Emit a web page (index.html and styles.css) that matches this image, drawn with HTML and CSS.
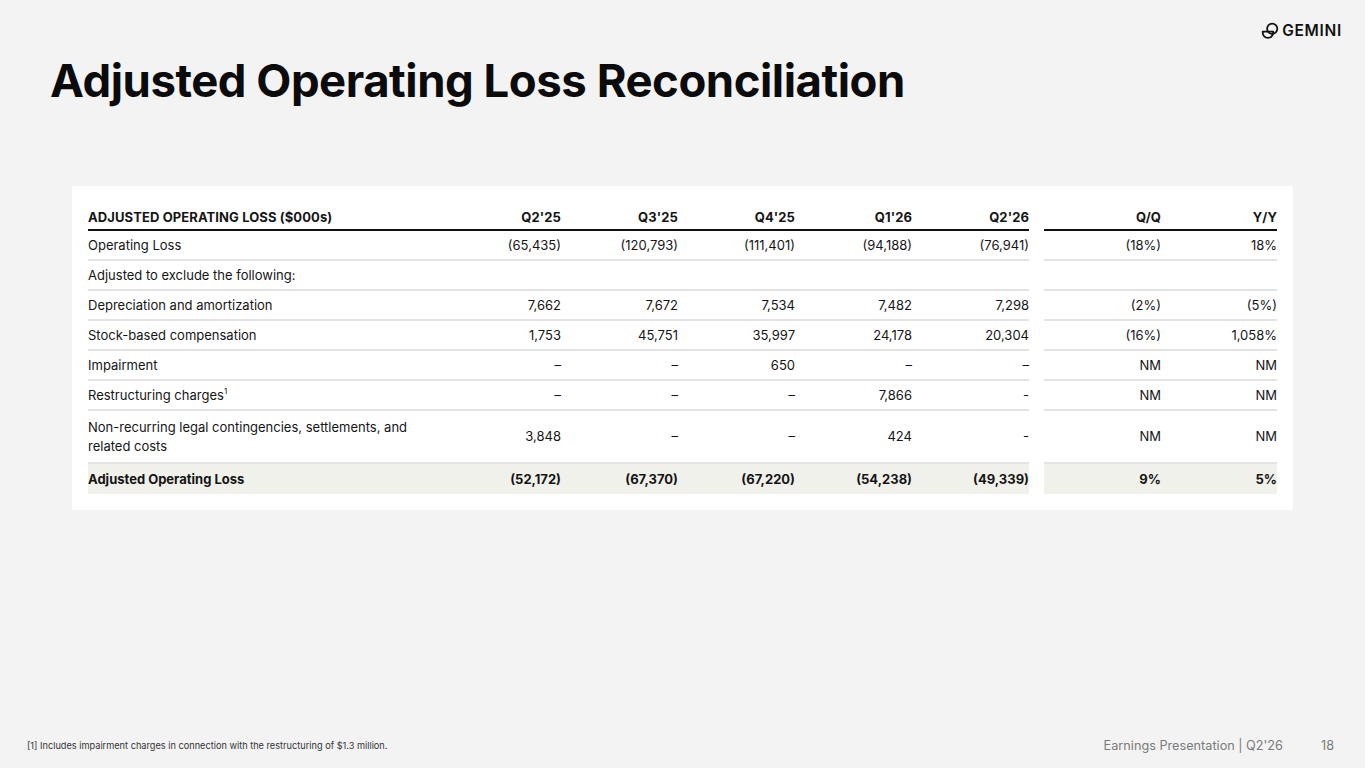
FILE: index.html
```html
<!DOCTYPE html>
<html lang="en">
<head>
<meta charset="utf-8">
<title>Adjusted Operating Loss Reconciliation</title>
<link rel="stylesheet" href="styles.css">
</head>
<body>
<div class="slide">
  <header class="top">
    <h1 class="title">Adjusted Operating Loss Reconciliation</h1>
    <div class="logo">
      <svg class="logo-mark" viewBox="0 0 18 18" width="18" height="18" aria-hidden="true">
        <circle cx="11.2" cy="6.8" r="5.1" fill="none" stroke="#111" stroke-width="1.8"/>
        <path d="M1.7 9.6 H12.2 V10.6 A5.2 5.2 0 0 1 7 15.8 H6.9 A5.2 5.2 0 0 1 1.7 10.6 Z" fill="none" stroke="#111" stroke-width="1.8" stroke-linejoin="round"/>
      </svg>
      <span class="logo-text">GEMINI</span>
    </div>
  </header>

  <section class="card">
    <table class="recon">
      <colgroup>
        <col class="c-label">
        <col class="c-num"><col class="c-num"><col class="c-num"><col class="c-num"><col class="c-num">
        <col class="c-gap">
        <col class="c-num"><col class="c-num2">
      </colgroup>
      <thead>
        <tr>
          <th class="lbl">ADJUSTED OPERATING LOSS ($000s)</th>
          <th>Q2'25</th><th>Q3'25</th><th>Q4'25</th><th>Q1'26</th><th>Q2'26</th>
          <th class="gap"></th>
          <th>Q/Q</th><th>Y/Y</th>
        </tr>
      </thead>
      <tbody>
        <tr>
          <td class="lbl">Operating Loss</td>
          <td>(65,435)</td><td>(120,793)</td><td>(111,401)</td><td>(94,188)</td><td>(76,941)</td>
          <td class="gap"></td>
          <td>(18%)</td><td>18%</td>
        </tr>
        <tr>
          <td class="lbl">Adjusted to exclude the following:</td>
          <td></td><td></td><td></td><td></td><td></td>
          <td class="gap"></td>
          <td></td><td></td>
        </tr>
        <tr>
          <td class="lbl">Depreciation and amortization</td>
          <td>7,662</td><td>7,672</td><td>7,534</td><td>7,482</td><td>7,298</td>
          <td class="gap"></td>
          <td>(2%)</td><td>(5%)</td>
        </tr>
        <tr>
          <td class="lbl">Stock-based compensation</td>
          <td>1,753</td><td>45,751</td><td>35,997</td><td>24,178</td><td>20,304</td>
          <td class="gap"></td>
          <td>(16%)</td><td>1,058%</td>
        </tr>
        <tr>
          <td class="lbl">Impairment</td>
          <td>–</td><td>–</td><td>650</td><td>–</td><td>–</td>
          <td class="gap"></td>
          <td>NM</td><td>NM</td>
        </tr>
        <tr>
          <td class="lbl">Restructuring charges<sup>1</sup></td>
          <td>–</td><td>–</td><td>–</td><td>7,866</td><td>-</td>
          <td class="gap"></td>
          <td>NM</td><td>NM</td>
        </tr>
        <tr class="tall">
          <td class="lbl">Non-recurring legal contingencies, settlements, and<br>related costs</td>
          <td>3,848</td><td>–</td><td>–</td><td>424</td><td>-</td>
          <td class="gap"></td>
          <td>NM</td><td>NM</td>
        </tr>
        <tr class="total">
          <td class="lbl">Adjusted Operating Loss</td>
          <td>(52,172)</td><td>(67,370)</td><td>(67,220)</td><td>(54,238)</td><td>(49,339)</td>
          <td class="gap"></td>
          <td>9%</td><td>5%</td>
        </tr>
      </tbody>
    </table>
  </section>

  <footer class="foot">
    <p class="note">[1] Includes impairment charges in connection with the restructuring of $1.3 million.</p>
    <div class="meta">
      <span class="deck">Earnings Presentation | Q2'26</span>
      <span class="page">18</span>
    </div>
  </footer>
</div>
</body>
</html>
```

FILE: styles.css
```css
* { box-sizing: border-box; }
html, body { margin: 0; padding: 0; }
body {
  background: #f3f3f3;
  font-family: Inter, "Liberation Sans", Arial, sans-serif;
  color: #111;
}
.slide {
  width: 1365px;
  height: 768px;
  display: flex;
  flex-direction: column;
}
.top {
  display: flex;
  justify-content: space-between;
  align-items: flex-start;
  padding: 0 23px 0 50px;
  height: 186px;
}
.title {
  margin: 55px 0 0;
  font-size: 45.5px;
  font-weight: 700;
  letter-spacing: -0.47px;
  line-height: 52px;
  color: #0b0b0b;
}
.logo {
  display: flex;
  align-items: center;
  gap: 3px;
  margin-top: 21px;
}
.logo-mark { display: block; }
.logo-text {
  font-size: 15.5px;
  font-weight: 600;
  letter-spacing: 0.7px;
  color: #111;
}
.card {
  margin: 0 72px;
  width: 1221px;
  background: #fff;
  padding: 19px 16px 16px;
}
.recon {
  width: 1189px;
  border-collapse: separate;
  border-spacing: 0;
  table-layout: fixed;
  font-size: 13px;
  color: #151515;
}
.c-label { width: 356px; }
.c-num { width: 117px; }
.c-num2 { width: 116px; }
.c-gap { width: 15px; }
.recon th {
  height: 26px;
  padding: 0;
  text-align: right;
  font-weight: 700;
  font-size: 13px;
  letter-spacing: 0.1px;
  vertical-align: middle;
  border-bottom: 2px solid #111;
}
.recon td {
  height: 30px;
  padding: 0;
  text-align: right;
  vertical-align: middle;
  border-bottom: 2px solid #e3e3e3;
  line-height: 19px;
}
.recon .lbl { text-align: left; }
.recon th.gap, .recon td.gap { border-bottom: none; background: #fff; }
.recon tr.tall td { height: 53px; }
.recon tr.total td {
  border-bottom: none;
  background: #f1f1ec;
  font-weight: 700;
  height: 30px;
}
.recon tr.total td.gap { background: #fff; }
sup {
  font-size: 8px;
  line-height: 0;
  vertical-align: 6px;
}
.foot {
  margin-top: auto;
  display: flex;
  justify-content: space-between;
  align-items: center;
  padding: 0 31px 15px 27px;
}
.note {
  margin: 0;
  font-size: 9.2px;
  color: #333;
}
.meta {
  display: flex;
  align-items: center;
  gap: 38px;
  font-size: 12.7px;
  color: #7a7a7a;
}
```
